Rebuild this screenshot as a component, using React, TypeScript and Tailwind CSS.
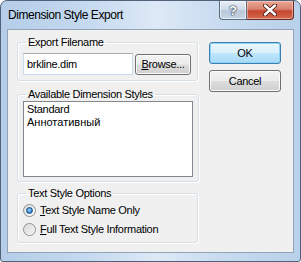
import React from "react";

function Radio({ checked }: { checked?: boolean }) {
  return (
    <div className="w-[13px] h-[13px] rounded-full border border-[#8c8e91] bg-[linear-gradient(135deg,#d6d7d9_0%,#f4f4f4_60%,#ffffff_100%)] flex items-center justify-center shrink-0">
      {checked ? (
        <div className="w-[7px] h-[7px] rounded-full border border-[#1b4f86] bg-[radial-gradient(circle_at_45%_40%,#a9e0ff_0%,#3d93d9_50%,#1c5fa5_100%)]" />
      ) : (
        <div className="w-[9px] h-[9px] rounded-full bg-[linear-gradient(135deg,#dcdcdc_0%,#f1f1f1_100%)]" />
      )}
    </div>
  );
}

function Button({ children, primary, className = "" }: { children: React.ReactNode; primary?: boolean; className?: string }) {
  return (
    <div
      className={
        "rounded-[3px] border flex items-center justify-center text-[11px] leading-[13px] text-black " +
        (primary
          ? "border-[#3c7fb1] bg-[linear-gradient(180deg,#eaf6fd_0%,#d9f0fc_48%,#bee6fd_52%,#a7d9f5_100%)] shadow-[inset_0_0_0_1px_#8fd3f7] "
          : "border-[#707070] bg-[linear-gradient(180deg,#f2f2f2_0%,#ebebeb_48%,#dddddd_52%,#cfcfcf_100%)] shadow-[inset_0_0_0_1px_#fcfcfc] ") +
        className
      }
    >
      {children}
    </div>
  );
}

export default function App() {
  return (
    <div className="w-[301px] h-[262px] overflow-hidden rounded-t-[7px] rounded-b-[3px] border border-[#51637a] bg-[linear-gradient(90deg,#b5cde8_0%,#c6daf0_30%,#dde9f6_52%,#c9dcf0_72%,#b9d0ea_100%)] flex flex-col font-['Liberation_Sans',Arial,sans-serif] text-black">
      {/* title bar */}
      <div className="h-[28px] flex items-start justify-between shrink-0">
        <div className="pl-[7px] pt-[7px] text-[12px] leading-[14px] tracking-[-0.45px] text-black">
          Dimension Style Export
        </div>
        <div className="flex mr-[6px]">
          <div className="w-[28px] h-[19px] rounded-bl-[4px] border border-t-0 border-[#5b6c82] bg-[linear-gradient(180deg,#e6edf5_0%,#d2dde9_45%,#b8c8da_55%,#c7d6e6_100%)] shadow-[inset_0_0_0_1px_rgba(255,255,255,0.6)] flex items-center justify-center">
            <span className="text-[13px] leading-[13px] font-bold text-white [text-shadow:0_0_1px_#2b3a4c,0_0_1px_#2b3a4c,0_0_2px_#2b3a4c]">?</span>
          </div>
          <div className="w-[47px] h-[19px] rounded-br-[4px] border border-l-0 border-t-0 border-[#6a2a20] bg-[linear-gradient(180deg,#e9a795_0%,#d9826f_45%,#c5462f_55%,#d16a4e_100%)] shadow-[inset_0_0_0_1px_rgba(255,220,210,0.5)] flex items-center justify-center">
            <svg width="14" height="12" viewBox="0 0 14 12">
              <path d="M2 1.5 L12 10.5 M12 1.5 L2 10.5" stroke="#4a1a12" strokeWidth="4.2" strokeLinecap="round" />
              <path d="M2 1.5 L12 10.5 M12 1.5 L2 10.5" stroke="#ffffff" strokeWidth="2.4" strokeLinecap="round" />
            </svg>
          </div>
        </div>
      </div>

      {/* client area */}
      <div className="mx-[6px] h-[224px] border border-[#93a3b6] bg-[#f0f0f0] flex text-[11px] leading-[13px] tracking-[-0.3px]">
        {/* left column */}
        <div className="ml-[9px] w-[181px] pt-[6px] flex flex-col">
          <fieldset className="border border-[#d5dfe5] rounded-[3px] px-[5px] pb-[5px] shadow-[inset_1px_1px_0_#ffffff,1px_1px_0_#ffffff]">
            <legend className="ml-[3px] px-[2px] leading-[13px]">Export Filename</legend>
            <div className="mt-[4px] flex items-center">
              <div className="w-[110px] h-[22px] bg-white border border-[#abadb3] border-l-[#c9d8ea] border-r-[#c9d8ea] border-b-[#c9d8ea] flex items-center pl-[3px]">
                brkline.dim
              </div>
              <Button className="ml-[2px] w-[56px] h-[21px]">
                <span>
                  <span className="underline">B</span>rowse...
                </span>
              </Button>
            </div>
          </fieldset>

          <fieldset className="mt-[7px] border border-[#d5dfe5] rounded-[3px] px-[5px] pb-[4px] shadow-[inset_1px_1px_0_#ffffff,1px_1px_0_#ffffff]">
            <legend className="ml-[3px] px-[2px] leading-[13px]">Available Dimension Styles</legend>
            <div className="h-[76px] w-[170px] bg-white border border-[#828790] pl-[3px] pt-[1px] flex flex-col">
              <div>Standard</div>
              <div className="tracking-normal">Аннотативный</div>
            </div>
          </fieldset>

          <fieldset className="mt-[5px] border border-[#d5dfe5] rounded-[3px] px-[5px] pb-[6px] shadow-[inset_1px_1px_0_#ffffff,1px_1px_0_#ffffff]">
            <legend className="ml-[3px] px-[2px] leading-[13px]">Text Style Options</legend>
            <div className="mt-[4px] flex flex-col gap-[6px]">
              <div className="flex items-center gap-[4px] h-[13px]">
                <Radio checked />
                <span>
                  <span className="underline">T</span>ext Style Name Only
                </span>
              </div>
              <div className="flex items-center gap-[4px] h-[13px]">
                <Radio />
                <span>
                  <span className="underline">F</span>ull Text Style Information
                </span>
              </div>
            </div>
          </fieldset>
        </div>

        {/* right column */}
        <div className="ml-[11px] pt-[12px] flex flex-col gap-[6px]">
          <Button primary className="w-[72px] h-[22px]">
            OK
          </Button>
          <Button className="w-[72px] h-[22px]">Cancel</Button>
        </div>
      </div>
    </div>
  );
}
